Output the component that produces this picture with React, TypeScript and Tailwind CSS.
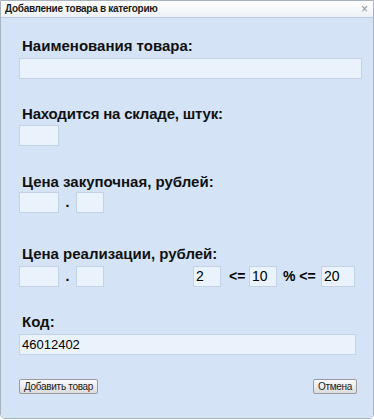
import React from "react";

const inp =
  "h-[21px] bg-[#eaf2fc] border border-[#c3d2e6] text-[12px] text-black px-[2px] flex items-center";
const lbl = "pl-[3px] text-[15px] font-bold leading-[18px] text-[#111]";
const btn =
  "h-[15px] px-[4px] text-[10px] tracking-[-0.3px] leading-none text-[#222] bg-gradient-to-b from-[#fbfbfb] to-[#dcdcdc] border border-[#9a9a9a] rounded-[2px]";

export default function App() {
  return (
    <div
      className="w-[374px] h-[420px] bg-white"
      style={{ fontFamily: '"Liberation Sans", Arial, sans-serif' }}
    >
      <div className="w-[374px] h-[419px] flex flex-col border border-[#a9b3c0] rounded-b-[5px] overflow-hidden">
        <div className="h-[17px] shrink-0 flex items-center justify-between bg-gradient-to-b from-[#ffffff] to-[#edf1f6] border-b border-[#bccce2] pl-[4px] pr-[5px]">
          <span className="text-[10px] tracking-[-0.3px] font-bold text-[#1a1a1a] leading-none">
            Добавление товара в категорию
          </span>
          <span className="text-[12px] text-[#8a8f96] leading-none">×</span>
        </div>
        <div className="flex-1 bg-[#d5e3f6] pl-[18px] flex flex-col">
          <div className={`${lbl} mt-[19px]`}>Наименования товара:</div>
          <div className={`${inp} mt-[3px] w-[343px]`}></div>

          <div className={`${lbl} mt-[26px] tracking-[-0.2px]`}>Находится на складе, штук:</div>
          <div className={`${inp} mt-[2px] w-[40px]`}></div>

          <div className={`${lbl} mt-[27px]`}>Цена закупочная, рублей:</div>
          <div className="flex items-center mt-[1px]">
            <div className={`${inp} w-[40px]`}></div>
            <span className="w-[17px] text-center font-bold text-[14px]">.</span>
            <div className={`${inp} w-[28px]`}></div>
          </div>

          <div className={`${lbl} mt-[32px]`}>Цена реализации, рублей:</div>
          <div className="flex items-center mt-[3px]">
            <div className={`${inp} w-[40px]`}></div>
            <span className="w-[17px] text-center font-bold text-[14px]">.</span>
            <div className={`${inp} w-[28px]`}></div>
            <div className={`${inp} w-[28px] ml-[89px] text-[14px]`}>2</div>
            <span className="ml-[8px] w-[20px] text-[14px] font-bold">&lt;=</span>
            <div className={`${inp} w-[28px] text-[14px]`}>10</div>
            <span className="ml-[6px] w-[38px] text-[14px] font-bold whitespace-pre">% &lt;=</span>
            <div className={`${inp} w-[34px] text-[14px]`}>20</div>
          </div>

          <div className={`${lbl} mt-[26px]`}>Код:</div>
          <div className={`${inp} mt-[3px] w-[337px] text-[13px]`}>46012402</div>

          <div className="flex justify-between items-center mt-[24px] w-[338px]">
            <button className={btn}>Добавить товар</button>
            <button className={btn}>Отмена</button>
          </div>
        </div>
      </div>
    </div>
  );
}
